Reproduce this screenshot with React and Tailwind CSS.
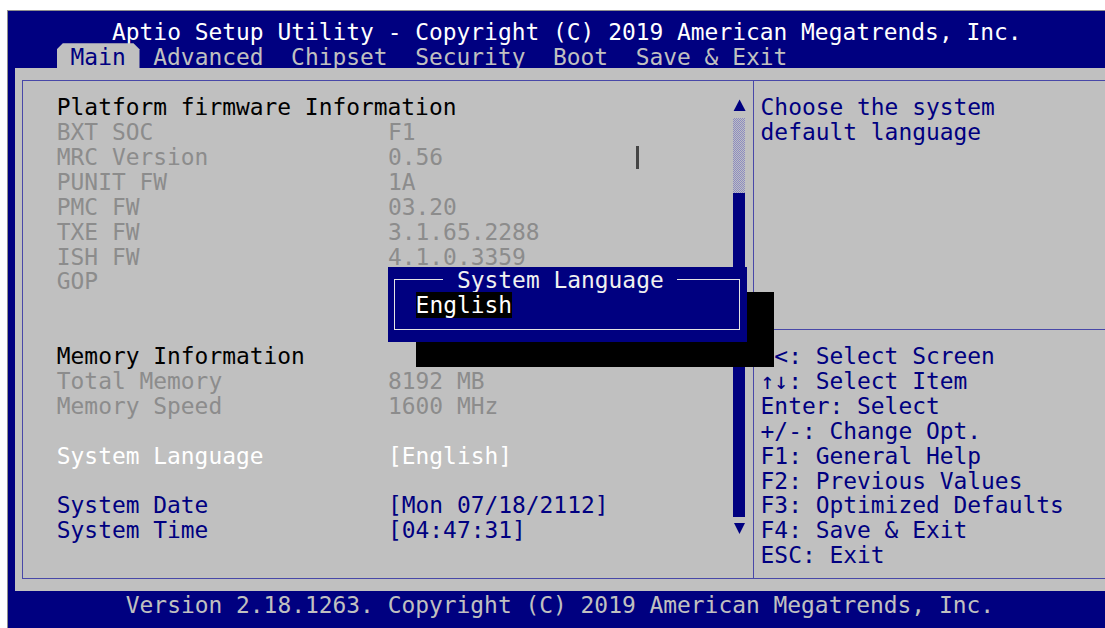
import React from "react";

// 80x25 text-mode cell: 13.8px wide, 24.9px tall
const mono =
  "font-['DejaVu_Sans_Mono',monospace] text-[22.9px] leading-[24.9px] whitespace-pre";

// each text row sits on the cell grid, glyphs nudged down a little
const row = "h-[24.9px] pt-[2px]";

const tones = {
  head: "text-black",
  dim: "text-[#8c8c8c]",
  active: "text-white",
  link: "text-[#000080]",
};

const mainRows = [
  { label: "Platform firmware Information", tone: "head" },
  { label: "BXT SOC", value: "F1", tone: "dim" },
  { label: "MRC Version", value: "0.56", tone: "dim", cursor: true },
  { label: "PUNIT FW", value: "1A", tone: "dim" },
  { label: "PMC FW", value: "03.20", tone: "dim" },
  { label: "TXE FW", value: "3.1.65.2288", tone: "dim" },
  { label: "ISH FW", value: "4.1.0.3359", tone: "dim" },
  { label: "GOP", value: "", tone: "dim" },
  {},
  {},
  { label: "Memory Information", tone: "head" },
  { label: "Total Memory", value: "8192 MB", tone: "dim" },
  { label: "Memory Speed", value: "1600 MHz", tone: "dim" },
  {},
  { label: "System Language", value: "[English]", tone: "active" },
  {},
  { label: "System Date", value: "[Mon 07/18/2112]", tone: "link" },
  { label: "System Time", value: "[04:47:31]", tone: "link" },
  {},
];

const keyHelp = [
  "><: Select Screen",
  "↑↓: Select Item",
  "Enter: Select",
  "+/-: Change Opt.",
  "F1: General Help",
  "F2: Previous Values",
  "F3: Optimized Defaults",
  "F4: Save & Exit",
  "ESC: Exit",
];

const tabs = ["Advanced", "Chipset", "Security", "Boot", "Save & Exit"];

const SettingRow = ({ label, value, tone, cursor }) => (
  <div className={`flex ${row} ${tones[tone] || ""}`}>
    <span className="w-[331.2px] shrink-0">{label}</span>
    {value !== undefined && (
      <span>
        {value}
        {cursor && (
          <span className="inline-block w-[3px] h-[23px] ml-[193.2px] bg-[#454545] align-[-4px]" />
        )}
      </span>
    )}
  </div>
);

const ScrollBar = () => (
  <div className="w-[13.8px] flex flex-col">
    <svg width="14" height="25" viewBox="0 0 14 25" className="block shrink-0">
      <polygon points="6.6,6.5 12.6,18 0.6,18" fill="#000080" />
    </svg>
    <div className="w-[12px] h-[74.7px] bg-[repeating-conic-gradient(#8a8ac4_0_25%,#c0c0c0_0_50%)] bg-[length:2px_2px]" />
    <div className="w-[12px] h-[323.7px] bg-[#000080]" />
    <svg width="14" height="25" viewBox="0 0 14 25" className="block shrink-0">
      <polygon points="1,6 12,6 6.5,17" fill="#000080" />
    </svg>
  </div>
);

const LanguagePopup = () => (
  <>
    <div className="absolute left-[407.6px] top-[281.3px] w-[358.8px] h-[74.7px] bg-black" />
    <div className="absolute left-[380px] top-[256.4px] w-[358.8px] h-[74.7px] bg-[#000080]">
      <div className="absolute left-[6.4px] right-[6.4px] top-[12px] bottom-[12px] border border-[#e4e4e4]" />
      <div className="relative h-[24.9px] pt-[1px] pl-[55.2px]">
        <span className="bg-[#000080] text-[#f0f0f0]">{" System Language "}</span>
      </div>
      <div className="relative h-[24.9px] pt-[1px] pl-[27.6px]">
        <span className="bg-black text-white">English</span>
      </div>
    </div>
  </>
);

export default function App() {
  return (
    <div className="w-[1105px] h-[628px] bg-white overflow-hidden pt-[10px] pl-[7px]">
      <div
        className={`relative h-[618px] border-l border-t border-[#8e8e8e] bg-[#000080] flex flex-col ${mono}`}
      >
        {/* title + menu tabs */}
        <div className="pt-[7.4px]">
          <div className={`${row} pl-[104px] text-white`}>
            Aptio Setup Utility - Copyright (C) 2019 American Megatrends, Inc.
          </div>
          <div className="flex h-[24.9px] pl-[48.8px] text-[#c0c0c0]">
            <span className="pt-[2px] bg-[#c0c0c0] text-[#000080] [clip-path:polygon(6px_0,calc(100%_-_6px)_0,100%_6px,100%_100%,0_100%,0_6px)]">
              {" Main "}
            </span>
            {tabs.map((t) => (
              <span key={t} className="pt-[2px]">
                {" " + t + " "}
              </span>
            ))}
          </div>
        </div>

        {/* page body */}
        <div className="ml-[7.4px] h-[522.9px] bg-[#c0c0c0] pt-[12px]">
          <div className="ml-[6.4px] h-[499px] flex border-l border-t border-b border-[#4848a8]">
            <div className="w-[730.4px] shrink-0 flex pt-[12px]">
              <div className="flex-1 pl-[34px]">
                {mainRows.map((r, i) => (
                  <SettingRow key={i} {...r} />
                ))}
              </div>
              <ScrollBar />
              <div className="w-[6.4px]" />
            </div>

            <div className="flex-1 flex flex-col border-l border-[#4848a8] text-[#000080]">
              <div className="h-[248.9px] border-b border-[#4848a8] pt-[12px] pl-[6.4px]">
                <div className={row}>Choose the system</div>
                <div className={row}>default language</div>
              </div>
              <div className="pt-[12px] pl-[6.4px]">
                {keyHelp.map((k) => (
                  <div key={k} className={row}>
                    {k}
                  </div>
                ))}
              </div>
            </div>
          </div>
        </div>

        {/* footer */}
        <div className="flex-1 pt-[2px] pl-[117.8px] text-[#c0c0c0]">
          Version 2.18.1263. Copyright (C) 2019 American Megatrends, Inc.
        </div>

        <LanguagePopup />
      </div>
    </div>
  );
}
